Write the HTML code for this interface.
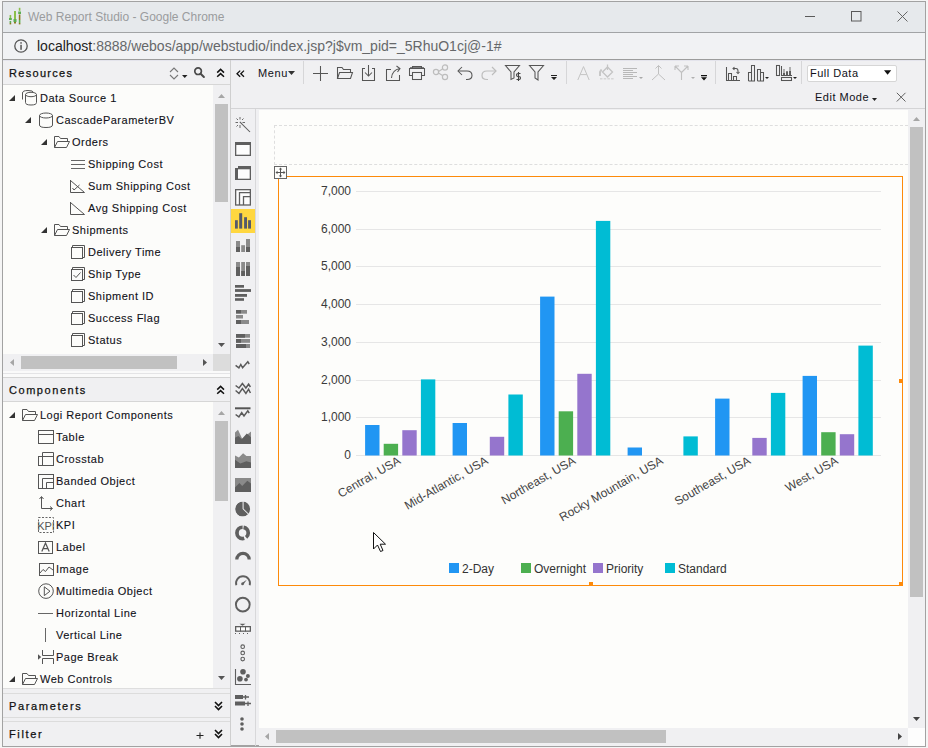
<!DOCTYPE html><html><head><meta charset="utf-8"><style>
*{box-sizing:border-box}
html,body{margin:0;padding:0}
body{width:928px;height:748px;position:relative;overflow:hidden;background:#f5f5f5;font-family:"Liberation Sans",sans-serif;color:#222}
.r{position:absolute}
.t{position:absolute;white-space:nowrap;line-height:14px}
svg{position:absolute;overflow:visible}

</style></head><body>
<div class="r" style="left:2px;top:1px;width:924px;height:746px;background:#a2a2a2;"></div>
<div class="r" style="left:3px;top:2px;width:922px;height:30px;background:#e6e9ec;"></div>
<div class="r" style="left:3px;top:32px;width:922px;height:1px;background:#a2a4a6;"></div>
<div class="r" style="left:3px;top:33px;width:922px;height:26px;background:#f1f2f4;"></div>
<div class="r" style="left:3px;top:59px;width:922px;height:1px;background:#9c9c9c;"></div>
<div class="r" style="left:3px;top:60px;width:922px;height:685px;background:#f0f0f2;"></div>
<div class="r" style="left:3px;top:60px;width:922px;height:1px;background:#e4e4ec;"></div>
<svg style="left:8px;top:7px;" width="14" height="18" viewBox="0 0 14 18"><g fill="#8cbf4a"><rect x="1.6" y="8" width="1.6" height="3"/><rect x="6" y="4" width="2" height="8"/><rect x="10.8" y="0.8" width="1.6" height="3"/></g><g fill="#5cae52"><rect x="1" y="11" width="2.8" height="2"/><rect x="1.6" y="14" width="1.6" height="2"/><rect x="5.5" y="12" width="3" height="3"/><rect x="10.2" y="4.5" width="2.8" height="2.5"/><rect x="10.8" y="13" width="1.6" height="3"/></g><g fill="#8a7a22"><rect x="1.6" y="16" width="1.6" height="1.4"/><rect x="6" y="15" width="2" height="1.5"/><rect x="10.8" y="7.5" width="1.6" height="5.5"/><rect x="10.8" y="16" width="1.6" height="1.4"/></g></svg>
<div class="t" style="left:28px;top:10px;font-size:12px;color:#9a9c9e;">Web Report Studio - Google Chrome</div>
<svg style="left:805px;top:16px;" width="12" height="2" viewBox="0 0 12 2"><rect x="0" y="0" width="10" height="1" fill="#5a5a5a"/></svg>
<svg style="left:851px;top:11px;" width="11" height="11" viewBox="0 0 11 11"><rect x="0.5" y="0.5" width="9.5" height="9.5" fill="none" stroke="#5a5a5a" stroke-width="1"/></svg>
<svg style="left:897px;top:11px;" width="11" height="11" viewBox="0 0 11 11"><path d="M0.5 0.5L10.5 10.5M10.5 0.5L0.5 10.5" stroke="#606060" stroke-width="0.95"/></svg>
<svg style="left:14px;top:39px;" width="14" height="14" viewBox="0 0 14 14"><circle cx="7" cy="7" r="6.2" fill="none" stroke="#555" stroke-width="1.3"/><rect x="6.3" y="3.2" width="1.5" height="1.5" fill="#555"/><rect x="6.3" y="5.8" width="1.5" height="5" fill="#555"/></svg>
<div class="t" style="left:37px;top:38px;font-size:14px;line-height:16px;color:#66686a"><span style="color:#222">localhost</span>:8888/webos/app/webstudio/index.jsp?j$vm_pid=_5RhuO1cj@-1#</div>
<div class="r" style="left:230px;top:60px;width:1px;height:686px;background:#cfcfcf;"></div>
<div class="t" style="left:9px;top:66px;font-size:11px;color:#111;letter-spacing:1.3px;-webkit-text-stroke:0.25px #111">Resources</div>
<div class="r" style="left:3px;top:84px;width:227px;height:1px;background:#d6d6d6;"></div>
<svg style="left:169px;top:67px;" width="10" height="13" viewBox="0 0 10 13"><path d="M1 5L5 1L9 5M1 8L5 12L9 8" fill="none" stroke="#777" stroke-width="1.1"/></svg>
<svg style="left:182px;top:75px;" width="6" height="4" viewBox="0 0 6 4"><path d="M0 0H5.5L2.75 3Z" fill="#222"/></svg>
<svg style="left:193px;top:66px;" width="13" height="13" viewBox="0 0 13 13"><circle cx="5.1" cy="5.2" r="3.3" fill="none" stroke="#4a4a4a" stroke-width="1.7"/><path d="M7.6 7.7L10.9 11" stroke="#4a4a4a" stroke-width="2" stroke-linecap="round"/></svg>
<svg style="left:216px;top:68px;" width="9" height="10" viewBox="0 0 9 10"><path d="M1.2 4.6L4.6 1.4L8 4.6M1.2 8.8L4.6 5.6L8 8.8" fill="none" stroke="#111" stroke-width="1.5"/></svg>
<div class="r" style="left:3px;top:85px;width:210px;height:269px;background:#fcfcfa;"></div>
<div class="r" style="left:213px;top:85px;width:17px;height:269px;background:#f0f0f2;"></div>
<div class="r" style="left:215px;top:104px;width:13px;height:98px;background:#c1c1c1;"></div>
<svg style="left:218px;top:94px;" width="8" height="5" viewBox="0 0 8 5"><path d="M0 4H7L3.5 0Z" fill="#a6a6a6"/></svg>
<svg style="left:218px;top:343px;" width="8" height="5" viewBox="0 0 8 5"><path d="M0 0H7L3.5 4Z" fill="#555"/></svg>
<div class="r" style="left:3px;top:354px;width:210px;height:17px;background:#f0f0f2;"></div>
<div class="r" style="left:21px;top:356px;width:156px;height:13px;background:#c1c1c1;"></div>
<svg style="left:10px;top:359px;" width="5" height="8" viewBox="0 0 5 8"><path d="M4 0V7L0 3.5Z" fill="#a6a6a6"/></svg>
<svg style="left:203px;top:359px;" width="5" height="8" viewBox="0 0 5 8"><path d="M0 0V7L4 3.5Z" fill="#555"/></svg>
<div class="r" style="left:213px;top:354px;width:17px;height:17px;background:#dcdcdc;"></div>
<div class="r" style="left:3px;top:371px;width:227px;height:6px;background:#fafafa;"></div>
<div class="r" style="left:3px;top:373px;width:227px;height:1px;background:#e4e4e6;"></div>
<div class="r" style="left:3px;top:377px;width:227px;height:1px;background:#d4d4d4;"></div>
<div class="t" style="left:9px;top:383px;font-size:11px;color:#111;letter-spacing:1.55px;-webkit-text-stroke:0.25px #111">Components</div>
<svg style="left:216px;top:385px;" width="9" height="10" viewBox="0 0 9 10"><path d="M1.2 4.6L4.6 1.4L8 4.6M1.2 8.8L4.6 5.6L8 8.8" fill="none" stroke="#111" stroke-width="1.5"/></svg>
<div class="r" style="left:3px;top:401px;width:227px;height:1px;background:#d6d6d6;"></div>
<div class="r" style="left:3px;top:402px;width:210px;height:286px;background:#fcfcfa;"></div>
<div class="r" style="left:213px;top:402px;width:17px;height:286px;background:#f0f0f2;"></div>
<div class="r" style="left:215px;top:421px;width:13px;height:80px;background:#c1c1c1;"></div>
<svg style="left:218px;top:411px;" width="8" height="5" viewBox="0 0 8 5"><path d="M0 4H7L3.5 0Z" fill="#a6a6a6"/></svg>
<svg style="left:218px;top:676px;" width="8" height="5" viewBox="0 0 8 5"><path d="M0 0H7L3.5 4Z" fill="#555"/></svg>
<div class="r" style="left:3px;top:688px;width:227px;height:1px;background:#dedede;"></div>
<div class="r" style="left:3px;top:693px;width:227px;height:25px;background:#f0f0f2;border-top:1px solid #dcdcdc;border-bottom:1px solid #dcdcdc"></div>
<div class="t" style="left:9px;top:699px;font-size:11px;color:#111;letter-spacing:1.65px;-webkit-text-stroke:0.25px #111">Parameters</div>
<svg style="left:214px;top:701px;" width="9" height="10" viewBox="0 0 9 10"><path d="M1 1L4.5 4.5L8 1M1 5L4.5 8.5L8 5" fill="none" stroke="#111" stroke-width="1.6"/></svg>
<div class="r" style="left:3px;top:721px;width:227px;height:25px;background:#f0f0f2;border-top:1px solid #dcdcdc"></div>
<div class="t" style="left:9px;top:727px;font-size:11px;color:#111;letter-spacing:1.65px;-webkit-text-stroke:0.25px #111">Filter</div>
<svg style="left:196px;top:732px;" width="8" height="8" viewBox="0 0 8 8"><path d="M0.5 3.5H7.5M4 0.5V6.8" stroke="#222" stroke-width="1.1"/></svg>
<svg style="left:214px;top:729px;" width="9" height="10" viewBox="0 0 9 10"><path d="M1 1L4.5 4.5L8 1M1 5L4.5 8.5L8 5" fill="none" stroke="#111" stroke-width="1.6"/></svg>
<svg style="left:9px;top:95px;" width="6" height="6" viewBox="0 0 6 6"><path d="M6 0V6H0Z" fill="#333"/></svg>
<svg style="left:22px;top:90px;" width="16" height="16" viewBox="0 0 16 16"><path d="M0.5 9.5V3Q0.5 0.5 6 0.5Q11.5 0.5 11.5 2.5" fill="none" stroke="#555" stroke-width="1"/><path d="M3.5 4.5V12.5Q3.5 15 9 15Q14.5 15 14.5 12.5V4.5" fill="#fcfcfa" stroke="#555" stroke-width="1"/><ellipse cx="9" cy="4.5" rx="5.5" ry="2.2" fill="#fcfcfa" stroke="#555" stroke-width="1"/></svg>
<div class="t" style="left:40px;top:91px;font-size:11px;color:#111118;letter-spacing:0.5px;-webkit-text-stroke:0.1px #111118">Data Source 1</div>
<svg style="left:25px;top:117px;" width="6" height="6" viewBox="0 0 6 6"><path d="M6 0V6H0Z" fill="#333"/></svg>
<svg style="left:38px;top:112px;" width="16" height="16" viewBox="0 0 16 16"><path d="M1.5 3.5V13Q1.5 15.5 8 15.5Q14.5 15.5 14.5 13V3.5" fill="none" stroke="#555" stroke-width="1"/><ellipse cx="8" cy="3.5" rx="6.5" ry="2.5" fill="none" stroke="#555" stroke-width="1"/></svg>
<div class="t" style="left:56px;top:113px;font-size:11px;color:#111118;letter-spacing:0.5px;-webkit-text-stroke:0.1px #111118">CascadeParameterBV</div>
<svg style="left:41px;top:139px;" width="6" height="6" viewBox="0 0 6 6"><path d="M6 0V6H0Z" fill="#333"/></svg>
<svg style="left:54px;top:134px;" width="16" height="16" viewBox="0 0 16 16"><path d="M0.5 13.5V2.5H5L6.5 4.5H13.5V7" fill="none" stroke="#555" stroke-width="1"/><path d="M0.5 13.5L3.5 7.5H15.5L12.5 13.5Z" fill="none" stroke="#555" stroke-width="1"/></svg>
<div class="t" style="left:72px;top:135px;font-size:11px;color:#111118;letter-spacing:0.5px;-webkit-text-stroke:0.1px #111118">Orders</div>
<svg style="left:70px;top:156px;" width="16" height="16" viewBox="0 0 16 16"><path d="M1 4.5H15M1 8.5H15M1 12.5H15" stroke="#666" stroke-width="1"/></svg>
<div class="t" style="left:88px;top:157px;font-size:11px;color:#111118;letter-spacing:0.5px;-webkit-text-stroke:0.1px #111118">Shipping Cost</div>
<svg style="left:70px;top:178px;" width="16" height="16" viewBox="0 0 16 16"><path d="M0.5 2V14.5H14.5L0.5 2.5Z" fill="none" stroke="#555" stroke-width="1"/><path d="M2.5 10L4 12L9.5 7" fill="none" stroke="#555" stroke-width="1"/></svg>
<div class="t" style="left:88px;top:179px;font-size:11px;color:#111118;letter-spacing:0.5px;-webkit-text-stroke:0.1px #111118">Sum Shipping Cost</div>
<svg style="left:70px;top:200px;" width="16" height="16" viewBox="0 0 16 16"><path d="M0.5 2V14.5H14.5L0.5 2.5Z" fill="none" stroke="#555" stroke-width="1"/></svg>
<div class="t" style="left:88px;top:201px;font-size:11px;color:#111118;letter-spacing:0.5px;-webkit-text-stroke:0.1px #111118">Avg Shipping Cost</div>
<svg style="left:41px;top:227px;" width="6" height="6" viewBox="0 0 6 6"><path d="M6 0V6H0Z" fill="#333"/></svg>
<svg style="left:54px;top:222px;" width="16" height="16" viewBox="0 0 16 16"><path d="M0.5 13.5V2.5H5L6.5 4.5H13.5V7" fill="none" stroke="#555" stroke-width="1"/><path d="M0.5 13.5L3.5 7.5H15.5L12.5 13.5Z" fill="none" stroke="#555" stroke-width="1"/></svg>
<div class="t" style="left:72px;top:223px;font-size:11px;color:#111118;letter-spacing:0.5px;-webkit-text-stroke:0.1px #111118">Shipments</div>
<svg style="left:70px;top:244px;" width="16" height="16" viewBox="0 0 16 16"><rect x="1.5" y="3.5" width="11" height="11" fill="none" stroke="#555" stroke-width="1"/><path d="M2.5 3V1.5H14.5V13.5H13" fill="none" stroke="#555" stroke-width="1"/></svg>
<div class="t" style="left:88px;top:245px;font-size:11px;color:#111118;letter-spacing:0.5px;-webkit-text-stroke:0.1px #111118">Delivery Time</div>
<svg style="left:70px;top:266px;" width="16" height="16" viewBox="0 0 16 16"><rect x="1.5" y="3.5" width="11" height="11" fill="none" stroke="#555" stroke-width="1"/><path d="M2.5 3V1.5H14.5V13.5H13" fill="none" stroke="#555" stroke-width="1"/><path d="M3.5 9L6 11.5L10.5 6.5" fill="none" stroke="#555" stroke-width="1"/></svg>
<div class="t" style="left:88px;top:267px;font-size:11px;color:#111118;letter-spacing:0.5px;-webkit-text-stroke:0.1px #111118">Ship Type</div>
<svg style="left:70px;top:288px;" width="16" height="16" viewBox="0 0 16 16"><rect x="1.5" y="3.5" width="11" height="11" fill="none" stroke="#555" stroke-width="1"/><path d="M2.5 3V1.5H14.5V13.5H13" fill="none" stroke="#555" stroke-width="1"/></svg>
<div class="t" style="left:88px;top:289px;font-size:11px;color:#111118;letter-spacing:0.5px;-webkit-text-stroke:0.1px #111118">Shipment ID</div>
<svg style="left:70px;top:310px;" width="16" height="16" viewBox="0 0 16 16"><rect x="1.5" y="3.5" width="11" height="11" fill="none" stroke="#555" stroke-width="1"/><path d="M2.5 3V1.5H14.5V13.5H13" fill="none" stroke="#555" stroke-width="1"/></svg>
<div class="t" style="left:88px;top:311px;font-size:11px;color:#111118;letter-spacing:0.5px;-webkit-text-stroke:0.1px #111118">Success Flag</div>
<svg style="left:70px;top:332px;" width="16" height="16" viewBox="0 0 16 16"><rect x="1.5" y="3.5" width="11" height="11" fill="none" stroke="#555" stroke-width="1"/><path d="M2.5 3V1.5H14.5V13.5H13" fill="none" stroke="#555" stroke-width="1"/></svg>
<div class="t" style="left:88px;top:333px;font-size:11px;color:#111118;letter-spacing:0.5px;-webkit-text-stroke:0.1px #111118">Status</div>
<svg style="left:9px;top:412px;" width="6" height="6" viewBox="0 0 6 6"><path d="M6 0V6H0Z" fill="#333"/></svg>
<svg style="left:22px;top:407px;" width="16" height="16" viewBox="0 0 16 16"><path d="M0.5 13.5V2.5H5L6.5 4.5H13.5V7" fill="none" stroke="#555" stroke-width="1"/><path d="M0.5 13.5L3.5 7.5H15.5L12.5 13.5Z" fill="none" stroke="#555" stroke-width="1"/></svg>
<div class="t" style="left:40px;top:408px;font-size:11px;color:#111118;letter-spacing:0.5px;-webkit-text-stroke:0.1px #111118">Logi Report Components</div>
<svg style="left:38px;top:429px;" width="16" height="16" viewBox="0 0 16 16"><rect x="0.5" y="1.5" width="15" height="13" fill="none" stroke="#555" stroke-width="1"/><path d="M0.5 5.5H15.5" fill="none" stroke="#555" stroke-width="1"/></svg>
<div class="t" style="left:56px;top:430px;font-size:11px;color:#111118;letter-spacing:0.5px;-webkit-text-stroke:0.1px #111118">Table</div>
<svg style="left:38px;top:451px;" width="16" height="16" viewBox="0 0 16 16"><rect x="0.5" y="5.5" width="15" height="9" fill="none" stroke="#555" stroke-width="1"/><path d="M4.5 14.5V1.5H15.5V14.5M4.5 5.5H15.5" fill="none" stroke="#555" stroke-width="1"/></svg>
<div class="t" style="left:56px;top:452px;font-size:11px;color:#111118;letter-spacing:0.5px;-webkit-text-stroke:0.1px #111118">Crosstab</div>
<svg style="left:38px;top:473px;" width="16" height="16" viewBox="0 0 16 16"><rect x="0.5" y="1.5" width="15" height="14" fill="none" stroke="#555" stroke-width="1"/><path d="M4.5 15.5V5.5H15.5M8.5 15.5V9.5H15.5" fill="none" stroke="#555" stroke-width="1"/></svg>
<div class="t" style="left:56px;top:474px;font-size:11px;color:#111118;letter-spacing:0.5px;-webkit-text-stroke:0.1px #111118">Banded Object</div>
<svg style="left:38px;top:495px;" width="16" height="16" viewBox="0 0 16 16"><path d="M3.5 2V13.5H14" fill="none" stroke="#555" stroke-width="1"/><path d="M1.5 4L3.5 1.5L5.5 4M12 11.5L14.5 13.5L12 15.5" fill="none" stroke="#555" stroke-width="1"/></svg>
<div class="t" style="left:56px;top:496px;font-size:11px;color:#111118;letter-spacing:0.5px;-webkit-text-stroke:0.1px #111118">Chart</div>
<svg style="left:38px;top:517px;" width="16" height="16" viewBox="0 0 16 16"><rect x="0.5" y="0.5" width="15" height="15" fill="none" stroke="#666" stroke-width="1" stroke-dasharray="2 1.5"/><text x="8" y="12.5" font-size="11" text-anchor="middle" fill="#555" font-family="Liberation Sans">KPI</text></svg>
<div class="t" style="left:56px;top:518px;font-size:11px;color:#111118;letter-spacing:0.5px;-webkit-text-stroke:0.1px #111118">KPI</div>
<svg style="left:38px;top:539px;" width="16" height="16" viewBox="0 0 16 16"><rect x="0.5" y="2.5" width="14" height="12" fill="none" stroke="#555" stroke-width="1"/><path d="M3.8 12.5L7.5 4L11.2 12.5M5.2 9.6H9.8" fill="none" stroke="#555" stroke-width="1.25"/></svg>
<div class="t" style="left:56px;top:540px;font-size:11px;color:#111118;letter-spacing:0.5px;-webkit-text-stroke:0.1px #111118">Label</div>
<svg style="left:38px;top:561px;" width="16" height="16" viewBox="0 0 16 16"><rect x="1.5" y="2.5" width="14" height="12" fill="none" stroke="#555" stroke-width="1"/><path d="M2 12L5 8.5L7.5 10.5L11 6L15 9" fill="none" stroke="#555" stroke-width="1"/></svg>
<div class="t" style="left:56px;top:562px;font-size:11px;color:#111118;letter-spacing:0.5px;-webkit-text-stroke:0.1px #111118">Image</div>
<svg style="left:38px;top:583px;" width="16" height="16" viewBox="0 0 16 16"><circle cx="8" cy="8.1" r="7.3" fill="none" stroke="#555" stroke-width="1"/><path d="M6.3 3.8V12.6L12 8.2Z" fill="none" stroke="#555" stroke-width="1"/></svg>
<div class="t" style="left:56px;top:584px;font-size:11px;color:#111118;letter-spacing:0.5px;-webkit-text-stroke:0.1px #111118">Multimedia Object</div>
<svg style="left:38px;top:605px;" width="16" height="16" viewBox="0 0 16 16"><path d="M0 8.5H15" stroke="#666" stroke-width="1"/></svg>
<div class="t" style="left:56px;top:606px;font-size:11px;color:#111118;letter-spacing:0.5px;-webkit-text-stroke:0.1px #111118">Horizontal Line</div>
<svg style="left:38px;top:627px;" width="16" height="16" viewBox="0 0 16 16"><path d="M7.5 1V15" stroke="#666" stroke-width="1"/></svg>
<div class="t" style="left:56px;top:628px;font-size:11px;color:#111118;letter-spacing:0.5px;-webkit-text-stroke:0.1px #111118">Vertical Line</div>
<svg style="left:38px;top:649px;" width="16" height="16" viewBox="0 0 16 16"><path d="M0 5.2L3.2 8L0 10.8Z" fill="#555"/><path d="M4.5 1V6.5H15.5V1M4.5 15V9.5H15.5V15" fill="none" stroke="#555" stroke-width="1"/></svg>
<div class="t" style="left:56px;top:650px;font-size:11px;color:#111118;letter-spacing:0.5px;-webkit-text-stroke:0.1px #111118">Page Break</div>
<svg style="left:9px;top:676px;" width="6" height="6" viewBox="0 0 6 6"><path d="M6 0V6H0Z" fill="#333"/></svg>
<svg style="left:22px;top:671px;" width="16" height="16" viewBox="0 0 16 16"><path d="M0.5 13.5V2.5H5L6.5 4.5H13.5V7" fill="none" stroke="#555" stroke-width="1"/><path d="M0.5 13.5L3.5 7.5H15.5L12.5 13.5Z" fill="none" stroke="#555" stroke-width="1"/></svg>
<div class="t" style="left:40px;top:672px;font-size:11px;color:#111118;letter-spacing:0.5px;-webkit-text-stroke:0.1px #111118">Web Controls</div>
<div class="r" style="left:231px;top:108px;width:694px;height:1px;background:#d4d4d6;"></div>
<svg style="left:236px;top:70px;" width="9" height="8" viewBox="0 0 9 8"><path d="M4.2 0.6L1 3.7L4.2 6.8M8 0.6L4.8 3.7L8 6.8" fill="none" stroke="#111" stroke-width="1.3"/></svg>
<div class="t" style="left:258px;top:66px;font-size:11px;color:#111118;letter-spacing:0.6px">Menu</div>
<svg style="left:288px;top:71px;" width="7" height="5" viewBox="0 0 7 5"><path d="M0 0H7L3.5 4Z" fill="#333"/></svg>
<div class="r" style="left:303px;top:61px;width:1px;height:23px;background:#d6d6d8;"></div>
<svg style="left:312px;top:65px;" width="17" height="17" viewBox="0 0 17 17"><path d="M8.5 1V16M1 8.5H16" fill="none" stroke="#555" stroke-width="1.05"/></svg>
<svg style="left:336px;top:66px;" width="18" height="14" viewBox="0 0 18 14"><path d="M1.5 12.5V1.5H6L7.5 3.5H14.5V6" fill="none" stroke="#555" stroke-width="1.05"/><path d="M1.5 12.5L3.5 6.5H16.5L14.5 12.5Z" fill="none" stroke="#555" stroke-width="1.05"/></svg>
<svg style="left:361px;top:64px;" width="15" height="18" viewBox="0 0 15 18"><path d="M4 4.5H1.5V16.5H13.5V4.5H11" fill="none" stroke="#555" stroke-width="1.05"/><path d="M7.5 1V12M4 8.5L7.5 12L11 8.5" fill="none" stroke="#555" stroke-width="1.05"/></svg>
<svg style="left:385px;top:64px;" width="17" height="18" viewBox="0 0 17 18"><path d="M6 5.5H1.5V16.5H14.5V11" fill="none" stroke="#555" stroke-width="1.05"/><path d="M6.5 14Q7 6 15 4.5M11.5 2L15 4.5L12.5 8" fill="none" stroke="#555" stroke-width="1.05"/></svg>
<svg style="left:408px;top:65px;" width="18" height="16" viewBox="0 0 18 16"><path d="M4.5 3.5V1.5H13.5V3.5M4.5 10.5H1.5V3.5H16.5V10.5H13.5" fill="none" stroke="#555" stroke-width="1.05"/><rect x="4.5" y="7.5" width="9" height="7" fill="none" stroke="#555" stroke-width="1.05"/><path d="M2 3H16" stroke="#555" stroke-width="1.5"/></svg>
<svg style="left:432px;top:64px;" width="17" height="18" viewBox="0 0 17 18"><circle cx="4" cy="8" r="2.6" fill="none" stroke="#bdbdbd" stroke-width="1.2"/><circle cx="13" cy="3.5" r="2.6" fill="none" stroke="#bdbdbd" stroke-width="1.2"/><circle cx="13" cy="13" r="2.6" fill="none" stroke="#bdbdbd" stroke-width="1.2"/><path d="M6.5 7.5L10.5 5M6.5 9L10.5 11.5" fill="none" stroke="#bdbdbd" stroke-width="1.2"/></svg>
<svg style="left:457px;top:66px;" width="17" height="15" viewBox="0 0 17 15"><path d="M1 5H10Q15 5 15 9.5Q15 13.5 10 13.5H9" fill="none" stroke="#555" stroke-width="1.05"/><path d="M5 1L1 5L5 9" fill="none" stroke="#555" stroke-width="1.05"/></svg>
<svg style="left:481px;top:66px;" width="17" height="15" viewBox="0 0 17 15"><path d="M15 5H6Q1 5 1 9.5Q1 13.5 6 13.5H7" fill="none" stroke="#bdbdbd" stroke-width="1.2"/><path d="M11 1L15 5L11 9" fill="none" stroke="#bdbdbd" stroke-width="1.2"/></svg>
<svg style="left:504px;top:64px;" width="19" height="18" viewBox="0 0 19 18"><path d="M1.5 1.5H15.5L10 8V14L7 15.5V8Z" fill="none" stroke="#555" stroke-width="1.05"/><path d="M16.5 9.5H14Q12.5 9.5 12.5 11Q12.5 12.5 14 12.5H15Q16.5 12.5 16.5 14Q16.5 15.5 15 15.5H12.5M14.5 8V17" fill="none" stroke="#444" stroke-width="1.1"/></svg>
<svg style="left:528px;top:64px;" width="18" height="18" viewBox="0 0 18 18"><path d="M1.5 1.5H15.5L10 8V16L7 14V8Z" fill="none" stroke="#555" stroke-width="1.05"/></svg>
<svg style="left:551px;top:75px;" width="7" height="6" viewBox="0 0 7 6"><path d="M0 0H6V1H0ZM0 2H6L3 5Z" fill="#222"/></svg>
<div class="r" style="left:566px;top:61px;width:1px;height:23px;background:#d6d6d8;"></div>
<svg style="left:577px;top:66px;" width="13" height="14" viewBox="0 0 13 14"><path d="M0.8 14L6.5 0.6L12.2 14M3.2 8.6H9.8" fill="none" stroke="#c4c4c4" stroke-width="1"/></svg>
<svg style="left:599px;top:64px;" width="17" height="17" viewBox="0 0 17 17"><path d="M3.5 8L8.5 3L13.5 8L8.5 13Z" fill="none" stroke="#c4c4c4" stroke-width="1.3"/><path d="M8.5 0.5V6" stroke="#c4c4c4" stroke-width="1.2"/><path d="M2.5 5.5L1 8V12" stroke="#c8c8c8" stroke-width="2"/><path d="M1 14.8H15" stroke="#d6d6d6" stroke-width="1.6" stroke-dasharray="2.5 1.2"/></svg>
<svg style="left:623px;top:67px;" width="21" height="13" viewBox="0 0 21 13"><path d="M0 1.5H14M0 3.5H10M0 5.5H14M0 7.5H10M0 9.5H14M0 11.5H10" stroke="#b8b8b8" stroke-width="1"/><path d="M16 10H20L18 12Z" fill="#a8a8a8"/></svg>
<svg style="left:651px;top:64px;" width="15" height="17" viewBox="0 0 15 17"><path d="M7.5 1.5V10L1 16M7.5 10L14 16M4.5 4.5L7.5 1.5L10.5 4.5" fill="none" stroke="#c0c0c0" stroke-width="1"/></svg>
<svg style="left:674px;top:65px;" width="22" height="16" viewBox="0 0 22 16"><path d="M1 1L7.5 7.5V15M14 1L7.5 7.5M1 1V5M1 1H5M14 1H10M14 1V5" fill="none" stroke="#c0c0c0" stroke-width="1.1"/><path d="M17 12H21L19 14Z" fill="#b0b0b0"/></svg>
<svg style="left:701px;top:75px;" width="6" height="6" viewBox="0 0 6 6"><path d="M0 0H6V1.2H0ZM0 2.2H6L3 5.5Z" fill="#111"/></svg>
<div class="r" style="left:715px;top:61px;width:1px;height:23px;background:#d6d6d8;"></div>
<svg style="left:722px;top:62px;" width="24" height="22" viewBox="0 0 24 22"><path d="M4.5 5V18.5H18" fill="none" stroke="#555" stroke-width="1.05"/><path d="M6.5 18V11.5H9.5V18M11.5 18V14.5H14.5V18" fill="none" stroke="#555" stroke-width="1.05"/><path d="M11 6.5H14Q16 6.5 16 9V11" fill="none" stroke="#555" stroke-width="1.05"/><path d="M12.5 5L11 6.5L12.5 8M14.5 10L16 11.5L17.5 10" fill="none" stroke="#555" stroke-width="1.05"/></svg>
<svg style="left:745px;top:62px;" width="26" height="22" viewBox="0 0 26 22"><path d="M3.5 19V10.5H6.5V19M6.5 19V3.5H9.5V19H3.5M12.5 19V7.5H15.5V19M15.5 19V10.5H18.5V19H12.5" fill="none" stroke="#555" stroke-width="1.05"/><path d="M20 15H24L22 17Z" fill="#222"/></svg>
<svg style="left:772px;top:62px;" width="28" height="22" viewBox="0 0 28 22"><rect x="4.5" y="3.5" width="3" height="10" fill="none" stroke="#555" stroke-width="1.05"/><path d="M9.5 4V13.5H20" fill="none" stroke="#555" stroke-width="1.05"/><path d="M12 13V7M15 13V9M18 13V5" stroke="#a8a8a8" stroke-width="1.8"/><path d="M12 13V11M15 13V9.5M18 13V9" stroke="#555" stroke-width="1.8"/><rect x="9.5" y="15.5" width="10" height="3" fill="none" stroke="#555" stroke-width="1.05"/><path d="M21 15H25L23 17Z" fill="#222"/></svg>
<div class="r" style="left:801px;top:61px;width:1px;height:23px;background:#d6d6d8;"></div>
<div class="r" style="left:807px;top:65px;width:90px;height:17px;background:#ffffff;border:1px solid #d6d6d6;border-radius:2px"></div>
<div class="t" style="left:810px;top:66px;font-size:11px;color:#111118;letter-spacing:0.5px">Full Data</div>
<svg style="left:884px;top:70px;" width="8" height="6" viewBox="0 0 8 6"><path d="M0 0.2H7.2L3.6 4.8Z" fill="#111"/></svg>
<div class="t" style="left:815px;top:90px;font-size:11px;color:#111118;letter-spacing:0.5px">Edit Mode</div>
<svg style="left:872px;top:98px;" width="5" height="3" viewBox="0 0 5 3"><path d="M0 0H5L2.5 3Z" fill="#222"/></svg>
<svg style="left:896px;top:92px;" width="10" height="10" viewBox="0 0 10 10"><path d="M0.8 0.8L9.5 9.5M9.5 0.8L0.8 9.5" stroke="#606060" stroke-width="1"/></svg>
<div class="r" style="left:255px;top:109px;width:1px;height:637px;background:#d8d8da;"></div>
<svg style="left:235px;top:117px;" width="16" height="16" viewBox="0 0 16 16"><path d="M4.8 4.8L15 15" stroke="#5a5a5a" stroke-width="1.05"/><path d="M5 0V2.5M5 8V11M0.5 5.5H3M7.5 5.5H10M1.5 1.5L3 3M8.5 1.5L7 3M1.5 9.5L3 8" stroke="#6a6a6a" stroke-width="1"/></svg>
<svg style="left:235px;top:142px;" width="16" height="14" viewBox="0 0 16 14"><rect x="0.65" y="0.65" width="14.7" height="12.7" fill="#fdfdfd" stroke="#5f5f5f" stroke-width="1.3"/><rect x="0" y="0" width="16" height="3" fill="#5f5f5f"/></svg>
<svg style="left:235px;top:166px;" width="16" height="14" viewBox="0 0 16 14"><rect x="0.65" y="2.65" width="14.7" height="10.7" fill="#fdfdfd" stroke="#5f5f5f" stroke-width="1.3"/><rect x="3" y="0" width="13" height="3" fill="#5f5f5f"/><rect x="0" y="2" width="3" height="12" fill="#5f5f5f"/></svg>
<svg style="left:235px;top:189px;" width="16" height="17" viewBox="0 0 16 17"><rect x="0.65" y="0.65" width="14.7" height="15.35" fill="#fdfdfd" stroke="#5f5f5f" stroke-width="1.3"/><path d="M4.5 16V3.65H15.35M8.5 16V7.65H15.35" fill="none" stroke="#5f5f5f" stroke-width="1.3"/></svg>
<div class="r" style="left:231px;top:209px;width:24px;height:24px;background:#ffd740;"></div>
<svg style="left:235px;top:213px;" width="16" height="16" viewBox="0 0 16 16"><rect x="0" y="7.2" width="2.8" height="8.4" fill="#555a6a"/><rect x="4.2" y="0.2" width="3" height="15.4" fill="#555a6a"/><rect x="9.1" y="4.2" width="2.9" height="11.4" fill="#555a6a"/><rect x="13.1" y="7.2" width="2.9" height="8.4" fill="#555a6a"/></svg>
<svg style="left:236px;top:239px;" width="14" height="13" viewBox="0 0 14 13"><rect x="0" y="2" width="4" height="11" fill="#8a8a8a"/><rect x="0" y="8" width="4" height="5" fill="#5f5f5f"/><rect x="5.2" y="6.2" width="3.8" height="6.8" fill="#8a8a8a"/><rect x="10" y="0" width="4" height="13" fill="#8a8a8a"/><rect x="10" y="8" width="4" height="5" fill="#5f5f5f"/></svg>
<svg style="left:236px;top:262px;" width="14" height="14" viewBox="0 0 14 14"><rect x="0" y="0" width="4" height="14" fill="#8a8a8a"/><rect x="0" y="5" width="4" height="9" fill="#5f5f5f"/><rect x="5.2" y="0" width="3.8" height="14" fill="#8a8a8a"/><rect x="5.2" y="9" width="3.8" height="5" fill="#5f5f5f"/><rect x="10" y="0" width="4" height="14" fill="#8a8a8a"/><rect x="10" y="4" width="4" height="10" fill="#5f5f5f"/></svg>
<svg style="left:235px;top:285px;" width="16" height="16" viewBox="0 0 16 16"><rect x="0" y="0" width="9" height="2.7" fill="#5f5f5f"/><rect x="0" y="4.1" width="16" height="2.8" fill="#5f5f5f"/><rect x="0" y="9" width="12" height="2.8" fill="#5f5f5f"/><rect x="0" y="13.2" width="9" height="2.6" fill="#5f5f5f"/></svg>
<svg style="left:236px;top:310px;" width="14" height="15" viewBox="0 0 14 15"><rect x="0" y="0" width="5" height="3.7" fill="#5f5f5f"/><rect x="5" y="0" width="6" height="3.7" fill="#8a8a8a"/><rect x="0" y="5" width="7" height="3.5" fill="#8a8a8a"/><rect x="0" y="10" width="5" height="4" fill="#5f5f5f"/><rect x="5" y="10" width="8" height="4" fill="#8a8a8a"/></svg>
<svg style="left:236px;top:334px;" width="14" height="14" viewBox="0 0 14 14"><rect x="0" y="0" width="14" height="3.7" fill="#8a8a8a"/><rect x="0" y="0" width="9" height="3.7" fill="#5f5f5f"/><rect x="0" y="5" width="14" height="3.8" fill="#8a8a8a"/><rect x="0" y="5" width="5" height="3.8" fill="#5f5f5f"/><rect x="0" y="10" width="14" height="4" fill="#8a8a8a"/><rect x="0" y="10" width="10" height="4" fill="#5f5f5f"/></svg>
<svg style="left:230px;top:350px;" width="26" height="70" viewBox="0 0 26 70"><path d="M5.6 15.4L8.9 17.8L10.8 14.5L12.6 17.8L17.8 11.7L19.2 14" fill="none" stroke="#5a5a5a" stroke-width="1.5" stroke-linejoin="miter"/><path d="M5.6 35.5L9 38L12.4 33.5L15.9 38L18.6 34.2L20.4 37" fill="none" stroke="#5a5a5a" stroke-width="1.5" stroke-linejoin="miter"/><path d="M5.6 40.5L9 43.5L12.4 38.6L15.9 43.5L18.6 39.2L20.4 43" fill="none" stroke="#5a5a5a" stroke-width="1.5" stroke-linejoin="miter"/><path d="M5 58.3H20.5" stroke="#555" stroke-width="2"/><path d="M5.6 64.5L8.9 66.9L11.7 62.7L14 66L17.8 60.8L19.2 63.1" fill="none" stroke="#5a5a5a" stroke-width="1.5" stroke-linejoin="miter"/></svg>
<svg style="left:230px;top:420px;" width="26" height="75" viewBox="0 0 26 75"><path d="M5.0 24.0L5.0 12.6L8.0 9.8L12.2 18.7L21.0 11.5L21.0 24.0Z" fill="#8a8a8a"/><path d="M5.0 24.0L5.0 17.8L8.4 15.9L11.7 19.2L16.8 13.6L21.0 17.3L21.0 24.0Z" fill="#5f5f5f"/><path d="M5.0 48.0L5.0 35.5L8.9 37.4L13.1 33.2L16.4 36.0L21.0 36.0L21.0 48.0Z" fill="#8a8a8a"/><path d="M5.0 48.0L5.0 39.8L10.3 43.5L16.4 41.2L21.0 42.6L21.0 48.0Z" fill="#5f5f5f"/><path d="M5.0 58.0L21.0 58.0L21.0 72.0L5.0 72.0Z" fill="#8a8a8a"/><path d="M5.0 72.0L5.0 67.4L9.4 63.1L12.2 66.0L17.3 60.8L21.0 63.6L21.0 72.0Z" fill="#5f5f5f"/></svg>
<svg style="left:235px;top:501px;" width="17" height="16" viewBox="0 0 17 16"><clipPath id="pc"><circle cx="7.6" cy="8.1" r="7.5"/></clipPath><g clip-path="url(#pc)"><path d="M7.6 8.1L13.00 13.31A7.5 7.5 0 1 1 7.59 0.5999999999999996Z" fill="#5f5f5f"/><path d="M8.61 7.67L8.61 0.17A7.5 7.5 0 0 1 14.01 12.88Z" fill="#5f5f5f"/></g></svg>
<svg style="left:235px;top:525px;" width="16" height="16" viewBox="0 0 16 16"><circle cx="7.6" cy="7.9" r="5.65" fill="none" stroke="#5f5f5f" stroke-width="3.7" stroke-dasharray="12.6 2 19.2 2" stroke-dashoffset="-1" transform="rotate(-90 7.6 7.9)"/></svg>
<svg style="left:235px;top:550px;" width="16" height="10" viewBox="0 0 16 10"><path d="M1.8 9.5A6.2 6.2 0 0 1 14.2 9.5" fill="none" stroke="#5f5f5f" stroke-width="3.2"/></svg>
<svg style="left:234px;top:572px;" width="18" height="16" viewBox="0 0 18 16"><path d="M2.3 13.3A7 7 0 1 1 15.7 13.3" fill="none" stroke="#5f5f5f" stroke-width="1.8"/><path d="M7.6 11.2L12.8 7.8L9.4 12.6Z" fill="#5f5f5f"/><circle cx="8.5" cy="11.9" r="1.3" fill="#5f5f5f"/></svg>
<svg style="left:234px;top:596px;" width="18" height="18" viewBox="0 0 18 18"><circle cx="8.8" cy="8.6" r="6.9" fill="none" stroke="#5f5f5f" stroke-width="1.9"/></svg>
<svg style="left:235px;top:623px;" width="16" height="12" viewBox="0 0 16 12"><path d="M4.5 0.8H10.5L7.5 2.8Z" fill="#5f5f5f"/><rect x="0.65" y="3.65" width="14.7" height="4.5" fill="#fdfdfd" stroke="#5f5f5f" stroke-width="1.3"/><path d="M5.5 3.5V8.5M10.5 3.5V8.5" stroke="#5f5f5f" stroke-width="1"/><path d="M0 10.5H16" stroke="#5f5f5f" stroke-width="1" stroke-dasharray="1 3"/></svg>
<svg style="left:238px;top:643px;" width="9" height="20" viewBox="0 0 9 20"><circle cx="4.7" cy="3.7" r="1.8" fill="none" stroke="#5f5f5f" stroke-width="1.1"/><circle cx="4.7" cy="9.9" r="1.8" fill="none" stroke="#5f5f5f" stroke-width="1.1"/><circle cx="4.7" cy="16.1" r="1.8" fill="none" stroke="#5f5f5f" stroke-width="1.1"/></svg>
<svg style="left:234px;top:667px;" width="18" height="19" viewBox="0 0 18 19"><path d="M1.5 2V17.5H17" fill="none" stroke="#5f5f5f" stroke-width="1.1"/><circle cx="9" cy="4.8" r="2.8" fill="#5f5f5f"/><circle cx="5.9" cy="11.8" r="2.8" fill="#5f5f5f"/><circle cx="13.9" cy="9" r="2" fill="#5f5f5f"/><circle cx="12" cy="12.6" r="1.9" fill="#5f5f5f"/></svg>
<svg style="left:235px;top:695px;" width="17" height="12" viewBox="0 0 17 12"><rect x="0" y="0" width="8" height="4" fill="#5f5f5f"/><path d="M8 2H14M10.5 0V4.5" stroke="#5f5f5f" stroke-width="1.3"/><rect x="0" y="6.5" width="10" height="4" fill="#5f5f5f"/><path d="M10 8.5H16M13 6.5V11" stroke="#5f5f5f" stroke-width="1.3"/></svg>
<svg style="left:240px;top:717px;" width="4" height="15" viewBox="0 0 4 15"><circle cx="2" cy="2" r="1.8" fill="#5f5f5f"/><circle cx="2" cy="7" r="1.8" fill="#5f5f5f"/><circle cx="2" cy="12" r="1.8" fill="#5f5f5f"/></svg>
<div class="r" style="left:259px;top:110px;width:649px;height:618px;background:#fdfdfb;"></div>
<div class="r" style="left:908px;top:110px;width:17px;height:618px;background:#f0f0f2;"></div>
<div class="r" style="left:910px;top:127px;width:13px;height:470px;background:#c1c1c1;"></div>
<svg style="left:913px;top:117px;" width="8" height="5" viewBox="0 0 8 5"><path d="M0 4H7L3.5 0Z" fill="#a6a6a6"/></svg>
<svg style="left:913px;top:717px;" width="8" height="5" viewBox="0 0 8 5"><path d="M0 0H7L3.5 4Z" fill="#444"/></svg>
<div class="r" style="left:259px;top:728px;width:649px;height:18px;background:#f0f0f2;"></div>
<div class="r" style="left:276px;top:730px;width:390px;height:13px;background:#c1c1c1;"></div>
<svg style="left:265px;top:733px;" width="5" height="8" viewBox="0 0 5 8"><path d="M4 0V7L0 3.5Z" fill="#a6a6a6"/></svg>
<svg style="left:898px;top:733px;" width="5" height="8" viewBox="0 0 5 8"><path d="M0 0V7L4 3.5Z" fill="#444"/></svg>
<div class="r" style="left:908px;top:728px;width:17px;height:18px;background:#fdfdfd;"></div>
<div class="r" style="left:274px;top:125px;width:634px;height:40px;border:1px dashed #dedede;border-right:none"></div>
<div class="r" style="left:278px;top:176px;width:625px;height:410px;background:transparent;border:1px solid #fd8a0a"></div>
<div class="r" style="left:274px;top:166px;width:13px;height:13px;background:#fdfdfb;border:1px solid #666"></div>
<svg style="left:275px;top:167px;" width="11" height="11" viewBox="0 0 11 11"><path d="M5.5 1.5V9.5M1.5 5.5H9.5" stroke="#555" stroke-width="1"/><path d="M5.5 0.5L3.8 2.5H7.2ZM5.5 10.5L3.8 8.5H7.2ZM0.5 5.5L2.5 3.8V7.2ZM10.5 5.5L8.5 3.8V7.2Z" fill="#555"/></svg>
<div class="r" style="left:899px;top:582px;width:4px;height:4px;background:#fd8a0a;"></div>
<div class="r" style="left:899px;top:379px;width:4px;height:4px;background:#fd8a0a;"></div>
<div class="r" style="left:589px;top:582px;width:4px;height:4px;background:#fd8a0a;"></div>
<svg style="left:0;top:0" width="928" height="748" viewBox="0 0 928 748"><rect x="356" y="191" width="525" height="1" fill="#e6e6e6"/><rect x="356" y="229" width="525" height="1" fill="#e6e6e6"/><rect x="356" y="266" width="525" height="1" fill="#e6e6e6"/><rect x="356" y="304" width="525" height="1" fill="#e6e6e6"/><rect x="356" y="342" width="525" height="1" fill="#e6e6e6"/><rect x="356" y="380" width="525" height="1" fill="#e6e6e6"/><rect x="356" y="417" width="525" height="1" fill="#e6e6e6"/><rect x="356" y="455" width="525" height="1" fill="#e6e6e6"/><text x="351" y="194.8" text-anchor="end" font-size="12" fill="#3a3a3a" font-family="Liberation Sans">7,000</text><text x="351" y="232.8" text-anchor="end" font-size="12" fill="#3a3a3a" font-family="Liberation Sans">6,000</text><text x="351" y="269.8" text-anchor="end" font-size="12" fill="#3a3a3a" font-family="Liberation Sans">5,000</text><text x="351" y="307.8" text-anchor="end" font-size="12" fill="#3a3a3a" font-family="Liberation Sans">4,000</text><text x="351" y="345.8" text-anchor="end" font-size="12" fill="#3a3a3a" font-family="Liberation Sans">3,000</text><text x="351" y="383.8" text-anchor="end" font-size="12" fill="#3a3a3a" font-family="Liberation Sans">2,000</text><text x="351" y="420.8" text-anchor="end" font-size="12" fill="#3a3a3a" font-family="Liberation Sans">1,000</text><text x="351" y="458.8" text-anchor="end" font-size="12" fill="#3a3a3a" font-family="Liberation Sans">0</text><rect x="365.1" y="425" width="14.4" height="30.5" fill="#2196f3"/><rect x="383.7" y="443.8" width="14.4" height="11.7" fill="#4caf50"/><rect x="402.3" y="430.2" width="14.4" height="25.3" fill="#9575cd"/><rect x="420.9" y="379.4" width="14.4" height="76.1" fill="#00bcd4"/><rect x="452.6" y="423" width="14.4" height="32.5" fill="#2196f3"/><rect x="489.8" y="436.8" width="14.4" height="18.7" fill="#9575cd"/><rect x="508.4" y="394.5" width="14.4" height="61.0" fill="#00bcd4"/><rect x="540.1" y="296.6" width="14.4" height="158.9" fill="#2196f3"/><rect x="558.7" y="411.3" width="14.4" height="44.2" fill="#4caf50"/><rect x="577.3" y="373.8" width="14.4" height="81.7" fill="#9575cd"/><rect x="595.9" y="220.9" width="14.4" height="234.6" fill="#00bcd4"/><rect x="627.6" y="447.5" width="14.4" height="8.0" fill="#2196f3"/><rect x="683.4" y="436.4" width="14.4" height="19.1" fill="#00bcd4"/><rect x="715.1" y="398.6" width="14.4" height="56.9" fill="#2196f3"/><rect x="752.3" y="437.9" width="14.4" height="17.6" fill="#9575cd"/><rect x="770.9" y="392.9" width="14.4" height="62.6" fill="#00bcd4"/><rect x="802.6" y="375.9" width="14.4" height="79.6" fill="#2196f3"/><rect x="821.2" y="432.2" width="14.4" height="23.3" fill="#4caf50"/><rect x="839.8" y="434.2" width="14.4" height="21.3" fill="#9575cd"/><rect x="858.4" y="345.6" width="14.4" height="109.9" fill="#00bcd4"/><text x="401.4" y="463" transform="rotate(-30 401.4 463)" text-anchor="end" font-size="12" fill="#444" font-family="Liberation Sans">Central, USA</text><text x="488.9" y="463" transform="rotate(-30 488.9 463)" text-anchor="end" font-size="12" fill="#444" font-family="Liberation Sans">Mid-Atlantic, USA</text><text x="576.4" y="463" transform="rotate(-30 576.4 463)" text-anchor="end" font-size="12" fill="#444" font-family="Liberation Sans">Northeast, USA</text><text x="663.9" y="463" transform="rotate(-30 663.9 463)" text-anchor="end" font-size="12" fill="#444" font-family="Liberation Sans">Rocky Mountain, USA</text><text x="751.4" y="463" transform="rotate(-30 751.4 463)" text-anchor="end" font-size="12" fill="#444" font-family="Liberation Sans">Southeast, USA</text><text x="838.9" y="463" transform="rotate(-30 838.9 463)" text-anchor="end" font-size="12" fill="#444" font-family="Liberation Sans">West, USA</text><rect x="449" y="563" width="10" height="10" fill="#2196f3"/><text x="462" y="572.5" font-size="12" fill="#333" font-family="Liberation Sans">2-Day</text><rect x="521" y="563" width="10" height="10" fill="#4caf50"/><text x="534" y="572.5" font-size="12" fill="#333" font-family="Liberation Sans">Overnight</text><rect x="593" y="563" width="10" height="10" fill="#9575cd"/><text x="606" y="572.5" font-size="12" fill="#333" font-family="Liberation Sans">Priority</text><rect x="665" y="563" width="10" height="10" fill="#00bcd4"/><text x="678" y="572.5" font-size="12" fill="#333" font-family="Liberation Sans">Standard</text></svg>
<svg style="left:373px;top:532px;" width="13" height="20" viewBox="0 0 13 20"><path d="M0.5 0.5V17L4.5 13L7.5 19.5L10 18.5L7.2 12.2H12.5Z" fill="#fff" stroke="#111" stroke-width="1" stroke-linejoin="round"/></svg>
</body></html>
